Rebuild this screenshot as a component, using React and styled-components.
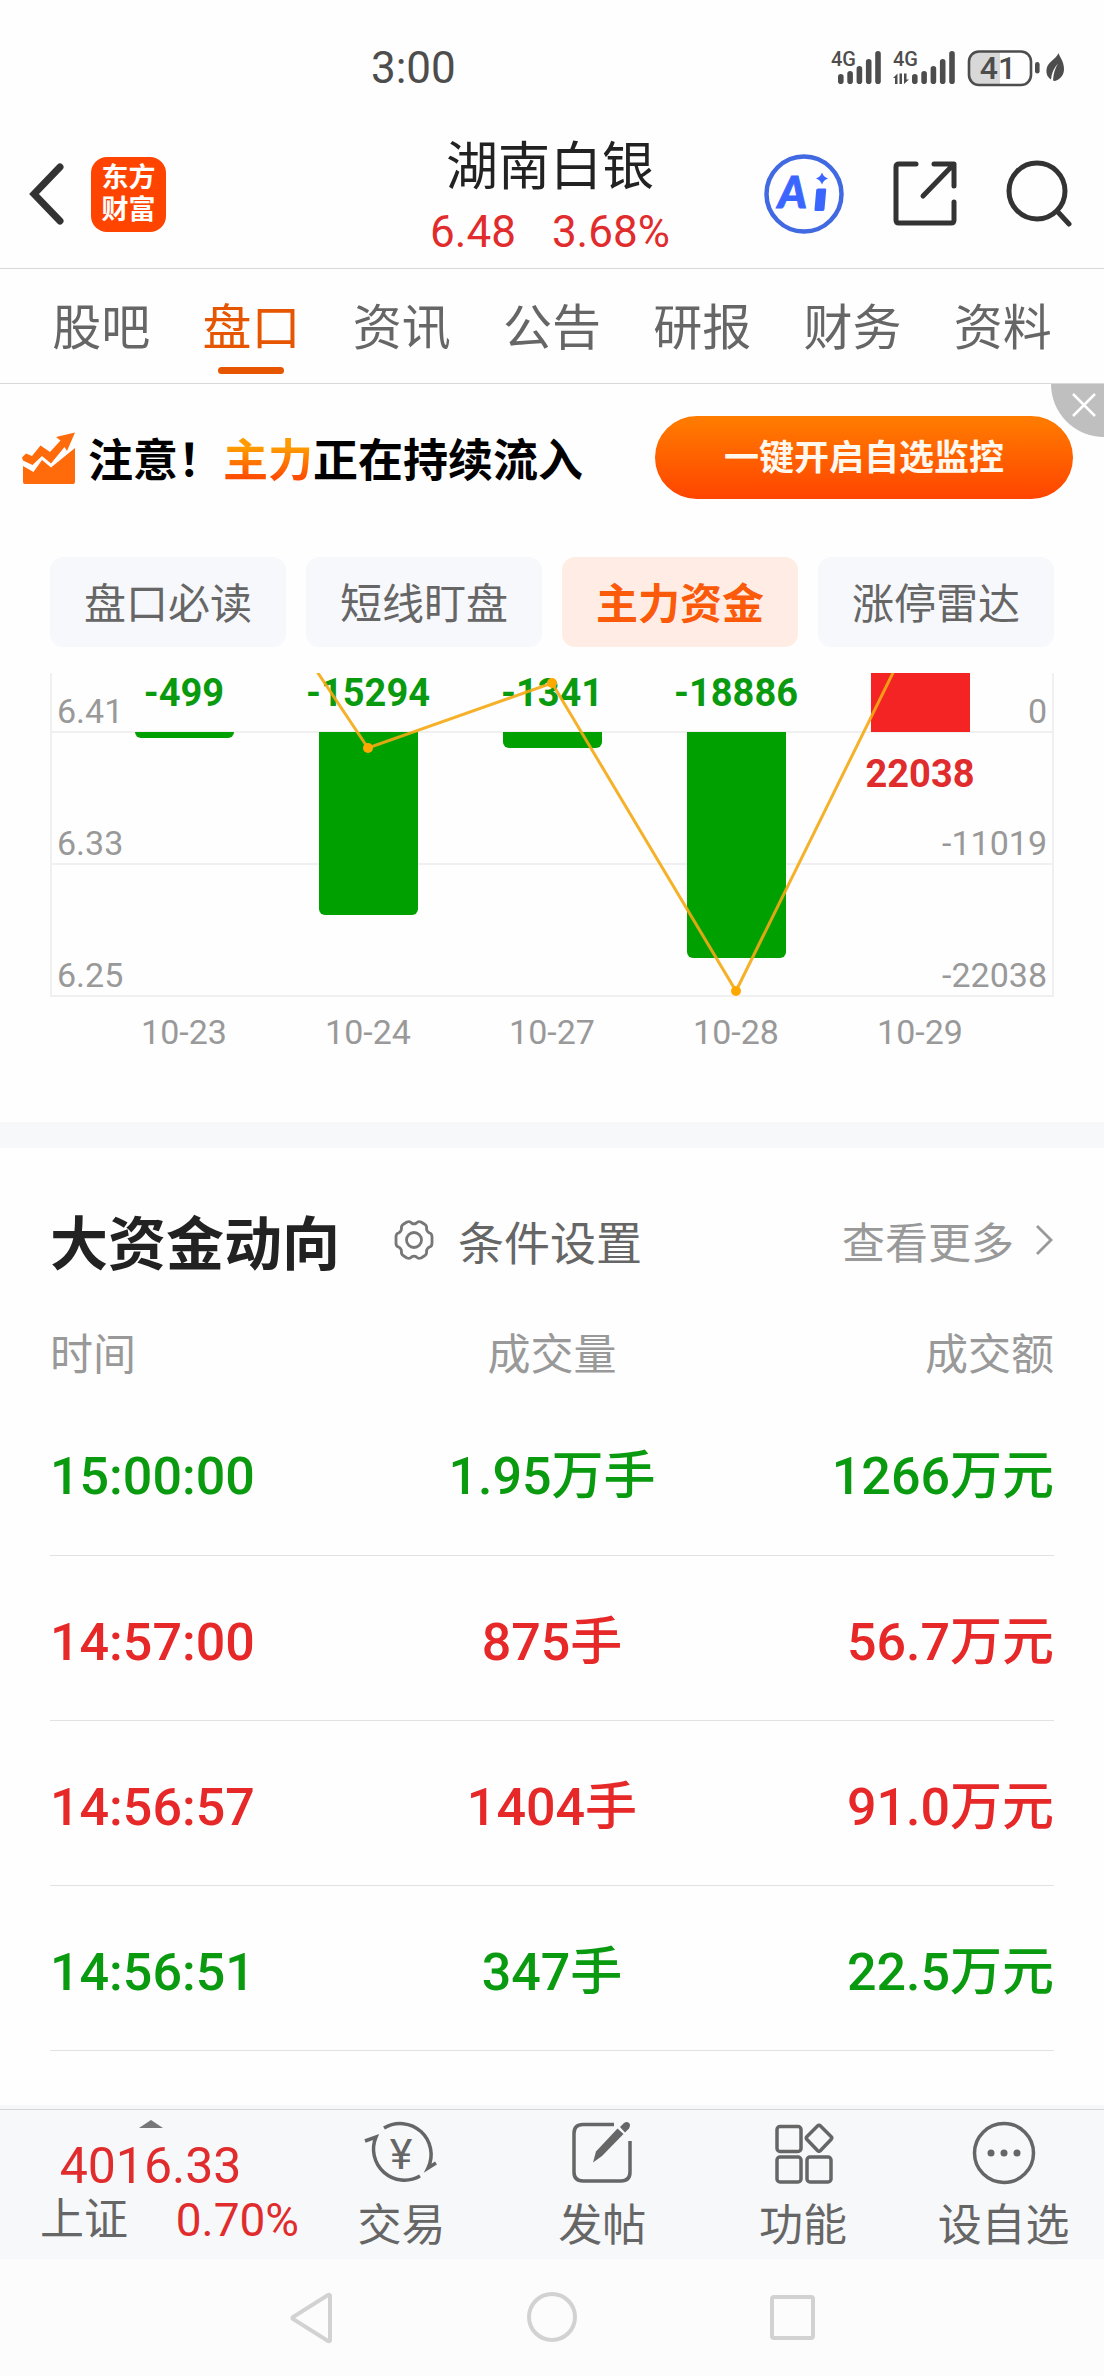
import React, { useState } from "react";
import styled, { createGlobalStyle } from "styled-components";

const tabs = ["股吧", "盘口", "资讯", "公告", "研报", "财务", "资料"];
const sections = ["盘口必读", "短线盯盘", "主力资金", "涨停雷达"];

const trades = [
  { time: "15:00:00", volume: "1.95万手", amount: "1266万元", up: false },
  { time: "14:57:00", volume: "875手", amount: "56.7万元", up: true },
  { time: "14:56:57", volume: "1404手", amount: "91.0万元", up: true },
  { time: "14:56:51", volume: "347手", amount: "22.5万元", up: false },
];

// chart units: the zero line sits at y = 59
const flows = [
  { date: "10-23", label: "-499", depth: 6, price: -201 },
  { date: "10-24", label: "-15294", depth: 183, price: 75 },
  { date: "10-27", label: "-1341", depth: 16, price: 10 },
  { date: "10-28", label: "-18886", depth: 226, price: 318 },
  { date: "10-29", label: "22038", depth: -263, price: -55 },
];
const levels = [
  { y: 59, price: "6.41", flow: "0" },
  { y: 191, price: "6.33", flow: "-11019" },
  { y: 323, price: "6.25", flow: "-22038" },
];
const ZERO = 59;
const centre = (i) => 134 + i * 184;

const Bar = ({ x, depth }) => {
  if (depth < 0) {
    return <rect x={x} y={ZERO + depth} width="99" height={-depth} fill="#f32423" />;
  }
  const r = Math.min(6, depth);
  return (
    <path
      d={`M${x} ${ZERO}h99v${depth - r}a${r} ${r} 0 0 1 -${r} ${r}h-${
        99 - 2 * r
      }a${r} ${r} 0 0 1 -${r} -${r}z`}
      fill="#00a000"
    />
  );
};

const FlowChart = () => (
  <Chart viewBox="0 -16 1004 408" role="img" aria-label="主力资金">
    <clipPath id="plot">
      <rect x="0" y="0" width="1004" height="392" />
    </clipPath>
    <g fill="none" stroke="#f0f0f0" strokeWidth="2">
      <path d="M1 0V323M1003 0V323" />
      {levels.map((level) => (
        <path key={level.y} d={`M0 ${level.y}H1004`} />
      ))}
    </g>
    {levels.map((level) => (
      <g key={level.y}>
        <AxisText x="7" y={level.y - 9}>
          {level.price}
        </AxisText>
        <AxisText x="997" y={level.y - 9} textAnchor="end">
          {level.flow}
        </AxisText>
      </g>
    ))}
    <g clipPath="url(#plot)">
      {flows.map((flow, i) => (
        <Bar key={flow.date} x={centre(i) - 49} depth={flow.depth} />
      ))}
    </g>
    {flows.map((flow, i) => (
      <g key={flow.date}>
        <FlowText x={centre(i)} y={flow.depth < 0 ? 114 : 33} $up={flow.depth < 0}>
          {flow.label}
        </FlowText>
        <AxisText x={centre(i)} y="371" textAnchor="middle">
          {flow.date}
        </AxisText>
      </g>
    ))}
    <g clipPath="url(#plot)">
      <polyline
        points={flows.map((flow, i) => `${centre(i)},${flow.price}`).join(" ")}
        fill="none"
        stroke="#f5a814"
        strokeWidth="3"
        strokeOpacity="0.9"
      />
      {flows.map((flow, i) => (
        <circle key={flow.date} cx={centre(i)} cy={flow.price} r="5" fill="#ffa800" />
      ))}
    </g>
  </Chart>
);

const barTops = [28, 25, 20, 13, 5];
const Signal = ({ x }) =>
  barTops.map((top, i) => (
    <rect key={top} x={x + i * 9.3} y={top} width="5.6" height={38 - top} rx="2.8" />
  ));

const StatusIcons = () => (
  <svg width="240" height="44" viewBox="0 0 240 44" fill="#4d4d4d">
    <SmallText x="3" y="20">4G</SmallText>
    <Signal x={10} />
    <SmallText x="65" y="20">4G</SmallText>
    <path d="M65 32l4.500-4.500v10.500h-2.500v-6zM71.500 27.500h2.500v10.500h-2.500zM76 27.500h2.500v6h2.500l-5 4.500z" />
    <Signal x={84} />
    <path d="M172 5.500h-21a9.500 9.500 0 0 0-9.500 9.500v14a9.500 9.500 0 0 0 9.500 9.500h21z" fill="#d8d8d8" />
    <rect x="141" y="5.500" width="62" height="33.500" rx="10" fill="none" stroke="#4d4d4d" strokeWidth="2.600" />
    <BatteryText x="170" y="33">41</BatteryText>
    <rect x="207" y="16" width="4.600" height="11.500" rx="2.300" />
    <path d="M230.500 7c1 4 5.500 8 5.500 16 0 6-3.500 10-9 12l-2-.500c.500-7 2-12 5-17-4 4.500-6.500 9.500-7 16-3-2-5-5-4.500-10 1-8 9.500-10 12-16.500z" />
  </svg>
);

const BackIcon = () => (
  <svg width="36" height="64" viewBox="0 0 36 64" fill="none" stroke="#333" strokeWidth="7">
    <path d="M32 5L6 32l26 27" strokeLinecap="round" />
  </svg>
);

const AiIcon = () => (
  <svg width="80" height="80" viewBox="0 0 80 80">
    <circle cx="40" cy="40" r="37.500" fill="none" stroke="#4169e1" strokeWidth="4.500" />
    <AiText x="14" y="54">A</AiText>
    <path d="M54 34.500h7q1.300 0 1.200 1.300l-1.700 19.500q-.2 1.700-1.700 1.700h-7q-1.500 0-1.300-1.500l1.700-19.500q.2-1.500 1.800-1.500z" fill="#3a66ff" />
    <path d="M58 18.500q1.500 4.500 6 6-4.500 1.500-6 6-1.500-4.500-6-6 4.500-1.500 6-6z" fill="#3a66ff" />
  </svg>
);

const ShareIcon = () => (
  <svg width="64" height="66" viewBox="0 0 64 66" fill="none" stroke="#333" strokeWidth="5" strokeLinecap="round" strokeLinejoin="round">
    <path d="M23 3H6q-3 0-3 3v53q0 3 3 3h52q3 0 3-3V41" />
    <path d="M41 3h20v22M60 4L30 35" />
  </svg>
);

const SearchIcon = () => (
  <svg width="66" height="68" viewBox="0 0 66 68" fill="none" stroke="#333" strokeWidth="5" strokeLinecap="round">
    <circle cx="31" cy="31" r="28" />
    <path d="M51 51l12 13" />
  </svg>
);

const GrowthIcon = () => (
  <svg width="54" height="54" viewBox="0 0 54 54" fill="#ff6a0a">
    <path d="M1 35l10.500 6L20 29l9 7.500L53 17v34q0 2-2 2H3q-2 0-2-2z" />
    <path d="M0 26.500l4-4 6 2.500 8.500-10.500L28 21l10.500-11.500L34 6 53 1.500 45 20l-2.500-4L29 32.500 20 25l-9.500 9L1 29.500z" />
  </svg>
);

const CloseIcon = () => (
  <svg width="24" height="24" viewBox="0 0 24 24" stroke="#fff" strokeWidth="2.500">
    <path d="M1 1l22 22M23 1L1 23" />
  </svg>
);

const GearIcon = () => (
  <svg width="40" height="42" viewBox="0 0 40 42" fill="none" stroke="#777" strokeWidth="2.800" strokeLinejoin="round">
    <path d="M13 3q3-1 4.500 1 2.500 1.800 5 0 1.500-2 4.500-1l4 2.500q2 1.500 1.500 4 0 3 3 4.500 2.500.500 2.500 4v6q0 3.500-2.500 4-3 1.500-3 4.500.500 2.500-1.500 4L27 39q-3 1-4.500-1-2.500-1.800-5 0-1.500 2-4.500 1l-4-2.500q-2-1.500-1.500-4 0-3-3-4.500Q2 27.500 2 24v-6q0-3.500 2.500-4 3-1.500 3-4.500Q7 7 9 5.500z" />
    <circle cx="20" cy="21" r="7.500" />
  </svg>
);

const MoreArrow = () => (
  <svg width="20" height="32" viewBox="0 0 20 32" fill="none" stroke="#999" strokeWidth="2.800">
    <path d="M3 2l14 14L3 30" />
  </svg>
);

const TradeIcon = () => (
  <>
    <path d="M24 12A31 31 0 0 1 68 52l8-5" />
    <path d="M60 60A31 31 0 0 1 16 21L5 25" />
    <YenText x="41" y="53">¥</YenText>
  </>
);

const PostIcon = () => (
  <>
    <path d="M53 8.500H22q-9 0-9 9V56q0 9 9 9h38q9 0 9-9V25" />
    <path d="M32 46.500l3-11L56.500 12.500l6 5.500L41 40z" fill="#666" stroke="none" />
    <path d="M59 11l4-4q3-2 5 0t0 5.500l-4 4z" fill="#666" stroke="none" />
  </>
);

const GridIcon = () => (
  <>
    <rect x="15" y="10.500" width="24" height="25" rx="3" />
    <rect x="15" y="41" width="24" height="25" rx="3" />
    <rect x="45" y="41" width="24" height="25" rx="3" />
    <path d="M55.500 10q1.500-1.500 3 0l10.500 10.500q1.500 1.500 0 3L58.500 34.500q-1.500 1.500-3 0L45 23.500q-1.500-1.500 0-3z" />
  </>
);

const DotsIcon = () => (
  <>
    <circle cx="41" cy="37" r="29.500" />
    <g fill="#666" stroke="none">
      <circle cx="28" cy="37" r="3.500" />
      <circle cx="41" cy="37" r="3.500" />
      <circle cx="54" cy="37" r="3.500" />
    </g>
  </>
);

const tools = [
  { name: "交易", icon: TradeIcon },
  { name: "发帖", icon: PostIcon },
  { name: "功能", icon: GridIcon },
  { name: "设自选", icon: DotsIcon },
];

const App = () => {
  const [tab, setTab] = useState("盘口");
  const [section, setSection] = useState("主力资金");
  const [showBanner, setShowBanner] = useState(true);

  return (
    <Page>
      <GlobalStyle />
      <StatusBar>
        <Clock>3:00</Clock>
        <StatusIcons />
      </StatusBar>

      <Header>
        <HeaderSide>
          <IconButton aria-label="返回">
            <BackIcon />
          </IconButton>
          <Logo href="#home">
            <span>东方</span>
            <span>财富</span>
          </Logo>
        </HeaderSide>
        <Stock>
          <StockName>湖南白银</StockName>
          <Quote>
            <span>6.48</span>
            <span>3.68%</span>
          </Quote>
        </Stock>
        <HeaderActions>
          <IconButton aria-label="AI">
            <AiIcon />
          </IconButton>
          <IconButton aria-label="分享">
            <ShareIcon />
          </IconButton>
          <IconButton aria-label="搜索">
            <SearchIcon />
          </IconButton>
        </HeaderActions>
      </Header>

      <Tabs>
        {tabs.map((name) => (
          <Tab key={name} $active={name === tab} onClick={() => setTab(name)}>
            {name}
          </Tab>
        ))}
      </Tabs>

      <Main>
        {showBanner && (
          <Banner>
            <GrowthIcon />
            <BannerText>
              注意！<em>主力</em>正在持续流入
            </BannerText>
            <BannerButton>一键开启自选监控</BannerButton>
            <CloseButton aria-label="关闭" onClick={() => setShowBanner(false)}>
              <CloseIcon />
            </CloseButton>
          </Banner>
        )}

        <Chips>
          {sections.map((name) => (
            <Chip key={name} $active={name === section} onClick={() => setSection(name)}>
              {name}
            </Chip>
          ))}
        </Chips>

        <FlowChart />

        <Separator />

        <SectionHead>
          <SectionTitle>大资金动向</SectionTitle>
          <Settings>
            <GearIcon />
            条件设置
          </Settings>
          <More href="#more">
            查看更多
            <MoreArrow />
          </More>
        </SectionHead>

        <Table>
          <thead>
            <tr>
              <th>时间</th>
              <th>成交量</th>
              <th>成交额</th>
            </tr>
          </thead>
          <tbody>
            {trades.map((trade) => (
              <TradeRow key={trade.time} $up={trade.up}>
                <td>{trade.time}</td>
                <td>{trade.volume}</td>
                <td>{trade.amount}</td>
              </TradeRow>
            ))}
          </tbody>
        </Table>
      </Main>

      <Toolbar>
        <Index>
          <svg width="24" height="8" viewBox="0 0 24 8">
            <path d="M12 0l12 8H0z" fill="#777" />
          </svg>
          <IndexValue>4016.33</IndexValue>
          <IndexRow>
            <span>上证</span>
            <IndexChange>0.70%</IndexChange>
          </IndexRow>
        </Index>
        {tools.map(({ name, icon: Icon }) => (
          <Tool key={name}>
            <svg width="82" height="72" viewBox="0 0 82 72" fill="none" stroke="#666" strokeWidth="3.500">
              <Icon />
            </svg>
            {name}
          </Tool>
        ))}
      </Toolbar>

      <SystemNav>
        <IconButton aria-label="后退">
          <svg width="50" height="52" viewBox="0 0 50 52">
            <path d="M43 3.500v45q-1 1-2 .500L6 27q-1-1 0-2L41 3q1-.500 2 .500z" />
          </svg>
        </IconButton>
        <IconButton aria-label="主屏幕">
          <svg width="50" height="52" viewBox="0 0 50 52">
            <circle cx="25" cy="25" r="23" />
          </svg>
        </IconButton>
        <IconButton aria-label="最近任务">
          <svg width="50" height="52" viewBox="0 0 50 52">
            <rect x="5" y="5" width="41" height="41" rx="2" />
          </svg>
        </IconButton>
      </SystemNav>
    </Page>
  );
};

export default App;

const GlobalStyle = createGlobalStyle`
  * {
    box-sizing: border-box;
  }
  body {
    margin: 0;
    background: #fefefe;
    color: #222;
    font-family: Roboto, "Noto Sans CJK SC", sans-serif;
  }
  button {
    margin: 0;
    padding: 0;
    border: none;
    background: none;
    color: inherit;
    font: inherit;
    cursor: pointer;
  }
  a {
    color: inherit;
    text-decoration: none;
  }
  svg {
    display: block;
    flex-shrink: 0;
  }
`;
const Page = styled.div`
  display: flex;
  flex-direction: column;
  min-height: 100vh;
`;
const StatusBar = styled.div`
  display: flex;
  align-items: center;
  justify-content: space-between;
  height: 122px;
  padding: 14px 36px 0 33.6%;
`;
const Clock = styled.span`
  font-size: 44px;
  line-height: 48px;
  color: #4d4d4d;
`;
const SmallText = styled.text`
  font-size: 20px;
  font-weight: 500;
`;
const BatteryText = styled.text`
  font-size: 32px;
  font-weight: 500;
  text-anchor: middle;
`;
const Header = styled.header`
  display: grid;
  grid-template-columns: 1fr auto 1fr;
  align-items: center;
  height: 147px;
  padding: 0 32px 2px 28px;
  border-bottom: 1px solid #d8d8d8;
`;
const HeaderSide = styled.div`
  display: flex;
  align-items: center;
  gap: 27px;
`;
const HeaderActions = styled.div`
  display: flex;
  align-items: center;
  justify-content: flex-end;
  gap: 49px;
`;
const IconButton = styled.button`
  display: grid;
  place-items: center;
`;
const Logo = styled.a`
  display: flex;
  flex-direction: column;
  align-items: center;
  justify-content: center;
  width: 75px;
  height: 75px;
  border-radius: 16px;
  background: #ff4400;
  color: white;
  font-size: 27px;
  font-weight: 700;
  line-height: 32px;
`;
const Stock = styled.div`
  padding-top: 12px;
  text-align: center;
`;
const StockName = styled.h1`
  margin: 0;
  font-size: 52px;
  font-weight: 400;
  line-height: 64px;
`;
const Quote = styled.div`
  display: flex;
  justify-content: center;
  gap: 36px;
  color: #e02c2c;
  font-size: 44px;
  line-height: 64px;
`;
const AiText = styled.text`
  font-family: Lato, sans-serif;
  font-size: 44px;
  font-style: italic;
  font-weight: 900;
  fill: #3a66ff;
  stroke: #3a66ff;
  stroke-width: 1;
`;
const Tabs = styled.nav`
  display: flex;
  height: 115px;
  padding: 0 26px;
  border-bottom: 1px solid #d8d8d8;
`;
const Tab = styled.button`
  position: relative;
  flex: 1;
  padding-bottom: 6px;
  color: ${({ $active }) => ($active ? "#e65500" : "#666")};
  font-size: 49px;
  &::after {
    content: "";
    display: ${({ $active }) => ($active ? "block" : "none")};
    position: absolute;
    bottom: 9px;
    left: 50%;
    width: 66px;
    height: 7px;
    margin-left: -33px;
    border-radius: 4px;
    background: #e65500;
  }
`;
const Main = styled.main`
  flex: 1;
`;
const Banner = styled.section`
  position: relative;
  display: flex;
  align-items: center;
  height: 147px;
  padding: 0 31px 0 22px;
`;
const BannerText = styled.p`
  flex: 1;
  margin: 0 0 0 12px;
  color: black;
  font-size: 45px;
  font-weight: 700;
  white-space: nowrap;
  & > em {
    font-style: normal;
    color: transparent;
    background: linear-gradient(#ff9a00 25%, #ff4d00 80%);
    background-clip: text;
  }
`;
const BannerButton = styled.button`
  width: 418px;
  height: 83px;
  padding-bottom: 6px;
  border-radius: 42px;
  background: linear-gradient(#ff7d00, #ff4400);
  color: #fff8ee;
  font-size: 35px;
  font-weight: 700;
`;
const CloseButton = styled.button`
  position: absolute;
  top: 0;
  right: 0;
  display: grid;
  place-items: center;
  width: 53px;
  height: 53px;
  padding: 0 0 12px 12px;
  border-bottom-left-radius: 100%;
  background: #bfbfbf;
`;
const Chips = styled.div`
  display: grid;
  grid-template-columns: repeat(4, 1fr);
  gap: 20px;
  padding: 26px 50px 10px;
`;
const Chip = styled.button`
  height: 90px;
  padding-bottom: 4px;
  border-radius: 13px;
  background: ${({ $active }) => ($active ? "#ffede5" : "#f7f8fb")};
  color: ${({ $active }) => ($active ? "#fa5a0a" : "#666")};
  font-size: 42px;
  font-weight: ${({ $active }) => ($active ? 700 : 400)};
`;
const Chart = styled.svg`
  width: calc(100% - 100px);
  margin: 0 50px 57px;
`;
const AxisText = styled.text`
  fill: #999;
  font-size: 34px;
`;
const FlowText = styled.text`
  fill: ${({ $up }) => ($up ? "#e02c2c" : "#0a9a0f")};
  font-size: 38px;
  font-weight: 700;
  text-anchor: middle;
`;
const Separator = styled.div`
  height: 26px;
  background: #f6f8fa;
`;
const SectionHead = styled.div`
  display: flex;
  align-items: center;
  height: 167px;
  padding: 16px 50px 0;
`;
const SectionTitle = styled.h2`
  margin: 0 54px 0 0;
  font-size: 58px;
  font-weight: 700;
`;
const Settings = styled.button`
  display: flex;
  align-items: center;
  gap: 24px;
  color: #666;
  font-size: 46px;
`;
const More = styled.a`
  display: flex;
  align-items: center;
  gap: 20px;
  margin-left: auto;
  color: #999;
  font-size: 43px;
`;
const Table = styled.table`
  width: calc(100% - 100px);
  margin: 0 50px;
  border-collapse: collapse;
  table-layout: fixed;
  th,
  td {
    padding: 0;
    text-align: center;
  }
  th:first-child,
  td:first-child {
    text-align: left;
  }
  th:last-child,
  td:last-child {
    text-align: right;
  }
  th {
    height: 75px;
    padding-bottom: 4px;
    color: #999;
    font-size: 43px;
    font-weight: 400;
  }
  td {
    padding: 49px 0 39px;
    line-height: 76px;
    vertical-align: baseline;
  }
`;
const TradeRow = styled.tr`
  height: 165px;
  border-bottom: 1px solid #e2e2e2;
  color: ${({ $up }) => ($up ? "#e62828" : "#0a9a0f")};
  font-size: 52px;
  font-weight: 500;
`;
const Toolbar = styled.nav`
  display: grid;
  grid-template-columns: 3fr 2fr 2fr 2fr 2fr;
  height: 154px;
  background: #f7f8fa;
  border-top: 4px solid #f7f8fa;
  box-shadow: inset 0 1px #d5d6d8;
`;
const Index = styled.button`
  display: flex;
  flex-direction: column;
  align-items: center;
  padding-top: 11px;
`;
const IndexValue = styled.span`
  margin-top: 10px;
  color: #e02c2c;
  font-size: 50px;
  line-height: 56px;
`;
const IndexRow = styled.span`
  display: flex;
  align-items: center;
  align-self: stretch;
  justify-content: space-between;
  padding: 0 2px 0 40px;
  color: #666;
  font-size: 44px;
  line-height: 52px;
`;
const IndexChange = styled.span`
  color: #e02c2c;
  font-size: 46px;
`;
const Tool = styled.button`
  display: flex;
  flex-direction: column;
  align-items: center;
  gap: 8px;
  padding-top: 7px;
  color: #666;
  font-size: 44px;
  line-height: 60px;
`;
const YenText = styled.text`
  fill: #666;
  stroke: none;
  font-size: 43px;
  text-anchor: middle;
`;
const SystemNav = styled.nav`
  display: flex;
  align-items: center;
  justify-content: center;
  gap: 190px;
  height: 117px;
  background: #fcfcfc;
  svg {
    fill: none;
    stroke: #d2d2d2;
    stroke-width: 4;
  }
`;
